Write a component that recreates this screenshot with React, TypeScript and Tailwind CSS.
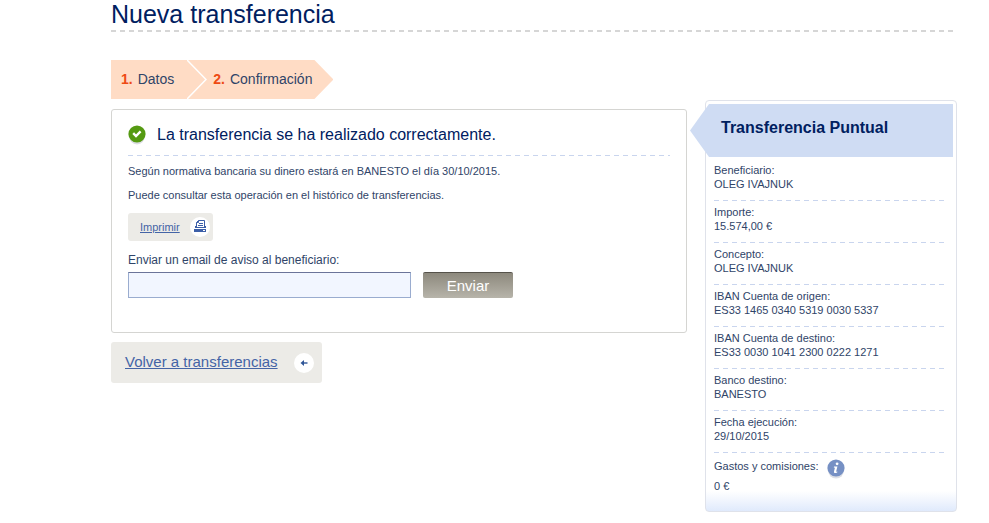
interface Detail {
  label: string
  value: string
}

const steps = ['Datos', 'Confirmación']

const details: Detail[] = [
  { label: 'Beneficiario:', value: 'OLEG IVAJNUK' },
  { label: 'Importe:', value: '15.574,00 €' },
  { label: 'Concepto:', value: 'OLEG IVAJNUK' },
  { label: 'IBAN Cuenta de origen:', value: 'ES33 1465 0340 5319 0030 5337' },
  { label: 'IBAN Cuenta de destino:', value: 'ES33 0030 1041 2300 0222 1271' },
  { label: 'Banco destino:', value: 'BANESTO' },
  { label: 'Fecha ejecución:', value: '29/10/2015' },
]

function BlueDashes() {
  return (
    <div className="h-px bg-[repeating-linear-gradient(90deg,#c9d5ee_0_5px,transparent_5px_9px)]" />
  )
}

function CheckIcon() {
  return (
    <svg width="18" height="20" viewBox="0 0 18 20" className="shrink-0" aria-hidden="true">
      <ellipse cx="9" cy="11" rx="8" ry="8.5" fill="#dcdce4" />
      <circle cx="9" cy="9" r="8.6" fill="#559a12" />
      <path d="M5.2 8.2 8 11l4.6-4.6" fill="none" stroke="#fff" strokeWidth="2.4" />
    </svg>
  )
}

function PrinterIcon() {
  return (
    <svg width="20" height="20" viewBox="0 0 20 20" className="shrink-0" aria-hidden="true">
      <circle cx="10" cy="10" r="10" fill="#fff" />
      <path d="M6.5 10.5v-5l2-2h6v7" fill="#fff" stroke="#3c5fa8" />
      <path d="M6.5 5.5h2v-2M9 6.5h4M8 8.5h5" fill="none" stroke="#3c5fa8" />
      <path d="M5 9h1v1h9V9h1v2H5zM4 12h12v3H4z" fill="#3c5fa8" />
      <path d="M13 13h2v1h-2z" fill="#fff" />
    </svg>
  )
}

function BackIcon() {
  return (
    <svg width="20" height="20" viewBox="0 0 20 20" className="shrink-0" aria-hidden="true">
      <circle cx="10" cy="10" r="10" fill="#fff" />
      <path d="M6.5 10 10 7v6z" fill="#2f5597" />
      <path d="M9 10h4.5" stroke="#2f5597" strokeWidth="1.4" />
    </svg>
  )
}

function InfoIcon() {
  return (
    <svg width="18" height="20" viewBox="0 0 18 20" aria-hidden="true">
      <ellipse cx="9" cy="11.2" rx="8" ry="8.4" fill="#dddfe5" />
      <circle cx="9" cy="9" r="8.6" fill="#7690c4" />
      <circle cx="10.1" cy="4.8" r="1.4" fill="#fff" />
      <path d="M7 7.5h3.4l-1.2 4.7q-.2.8 1.2.2l-.2 1q-3.8 1.6-3.2-.9l.9-3.8-1.1-.2z" fill="#fff" />
    </svg>
  )
}

export default function App() {
  return (
    <div className="min-h-screen bg-white pl-[111px] pr-8 font-['Liberation_Sans',Arial,sans-serif] text-[11px] text-[#2f4468]">
      <header className="mr-1">
        <h1 className="pb-[2px] text-[25px] leading-7 text-[#00205f]">Nueva transferencia</h1>
        <div className="h-[2px] bg-[repeating-linear-gradient(90deg,#d6d6d6_0_5px,transparent_5px_9px)]" />
      </header>

      <div className="flex items-start gap-[18px] pt-7">
        <main className="min-w-0 flex-1">
          <ol className="flex h-[39px] w-fit items-center bg-[#ffdcc5] pl-[10px] pr-[21px] text-[14px] text-[#2f4468] [clip-path:polygon(0_0,calc(100%-19px)_0,100%_50%,calc(100%-19px)_100%,0_100%)]">
            {steps.map((step, i) => (
              <li key={step} className="flex items-center">
                {i > 0 && (
                  <svg width="20" height="39" viewBox="0 0 20 39" className="ml-[13px] mr-1.5" aria-hidden="true">
                    <path d="M0 0 19 19.5 0 39" fill="none" stroke="#fff" strokeWidth="1.5" />
                  </svg>
                )}
                <b className="mr-[5px] text-[#ee4a14]">{i + 1}.</b>
                {step}
              </li>
            ))}
          </ol>

          <section className="mt-[10px] rounded-[3px] border border-[#d5d5d2] px-4 pb-[34px] pt-[15px]">
            <div className="flex h-5 items-center gap-[11px]">
              <CheckIcon />
              <h2 className="text-[16px] leading-5 text-[#00205f]">La transferencia se ha realizado correctamente.</h2>
            </div>
            <div className="pt-[10px]">
              <BlueDashes />
            </div>
            <p className="mt-[7px] leading-4">Según normativa bancaria su dinero estará en BANESTO el día 30/10/2015.</p>
            <p className="mt-2 leading-4">Puede consultar esta operación en el histórico de transferencias.</p>

            <button type="button" className="mt-[10px] flex h-7 items-center gap-[10px] rounded-[3px] bg-[#ecebe7] pl-3 pr-[3px] text-[#4464a6]">
              <span className="underline">Imprimir</span>
              <PrinterIcon />
            </button>

            <form onSubmit={e => e.preventDefault()}>
              <label htmlFor="email" className="mt-[11px] block text-[12px] leading-4">Enviar un email de aviso al beneficiario:</label>
              <div className="mt-1 flex items-end gap-3">
                <input
                  id="email"
                  type="email"
                  className="h-[26px] w-[283px] border border-[#9aaccf] border-t-[#6b7499] bg-[#f2f6ff] px-2"
                />
                <button type="submit" className="h-[26px] w-[90px] rounded-[2px] border-t border-[#55524a] bg-linear-to-b from-[#8d897d] to-[#b7b4aa] text-[15px] leading-6 text-white">
                  Enviar
                </button>
              </div>
            </form>
          </section>

          <a href="#transferencias" className="mt-[9px] flex h-[41px] w-fit items-center gap-4 rounded-[3px] bg-[#ecebe7] pl-[14px] pr-2 text-[15px] text-[#4464a6]">
            <span className="underline">Volver a transferencias</span>
            <BackIcon />
          </a>
        </main>

        <aside className="mt-10 w-[252px] rounded-[4px] border border-[#dfe2ea] bg-linear-to-t from-[#e0eafc] to-white to-[20px] pb-[18px]">
          {/* the ribbon hangs out over the left border */}
          <h2 className="-ml-4 mr-[3px] mt-[3px] h-[53px] bg-[#cfdcf3] pl-[31px] text-[16px] font-bold leading-[48px] text-[#00205f] [clip-path:polygon(19px_0,100%_0,100%_100%,19px_100%,0_50%)]">
            Transferencia Puntual
          </h2>
          <dl className="pl-2 pr-[10px] pt-[2px] leading-[14px]">
            {details.map(({ label, value }) => (
              <div key={label} className="pt-1">
                <dt>{label}</dt>
                <dd className="pb-[9px]">{value}</dd>
                <BlueDashes />
              </div>
            ))}
            <div className="pt-[6px]">
              <dt className="flex items-start gap-2">
                Gastos y comisiones:
                <button type="button" aria-label="Información">
                  <InfoIcon />
                </button>
              </dt>
              <dd>0 €</dd>
            </div>
          </dl>
        </aside>
      </div>
    </div>
  )
}
